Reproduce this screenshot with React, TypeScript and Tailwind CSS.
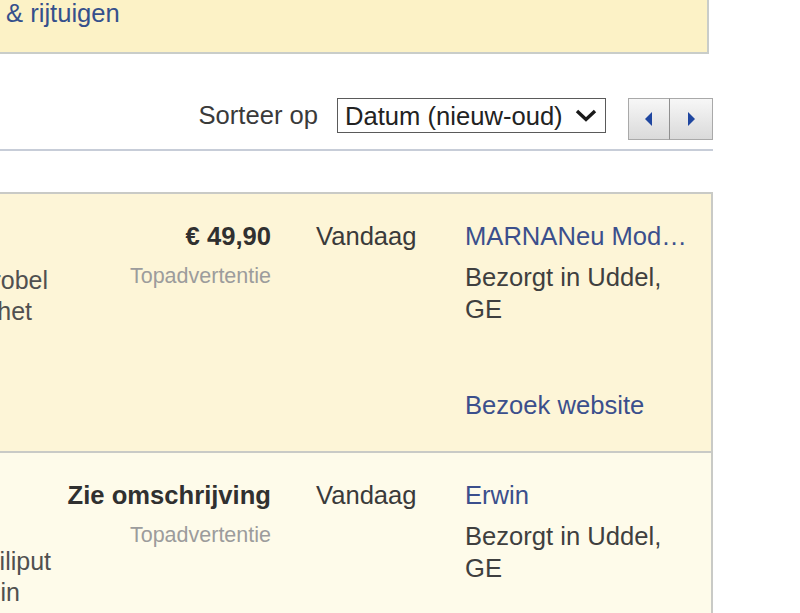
import React from "react";

function Row({
  bg,
  descPt,
  lines,
  price,
  seller,
  showWebsite,
}: {
  bg: string;
  descPt: string;
  lines: { text: string; pr: string }[];
  price: string;
  seller: string;
  showWebsite?: boolean;
}) {
  return (
    <div className={`flex border-t-2 border-r-2 border-[#c9cac6] ${bg}`}>
      <div className={`-ml-[300px] w-[356px] shrink-0 text-[25px] leading-[31px] text-[#505050] ${descPt}`}>
        {lines.map((l, i) => (
          <div key={i} className={`whitespace-nowrap text-right ${l.pr}`}>
            {l.text}
          </div>
        ))}
      </div>
      <div className="w-[215px] shrink-0 pt-[26px] text-right">
        <div className="text-[25.6px] leading-[32px] text-[#303030] font-bold whitespace-nowrap">{price}</div>
        <div className="mt-[12px] text-[21.5px] leading-[24px] text-[#9c9c9c]">Topadvertentie</div>
      </div>
      <div className="ml-[45px] w-[149px] shrink-0 pt-[26px] text-[25.6px] leading-[32px] text-[#3a3a3a]">
        Vandaag
      </div>
      <div className="w-[222px] shrink-0 pt-[26px] pb-[30px] text-[25.6px] leading-[32px]">
        <div className="truncate text-[#3b4f8c]">{seller}</div>
        <div className="mt-[9px] text-[#3f3f3f]">Bezorgt in Uddel, GE</div>
        {showWebsite ? (
          <div className="mt-[64px] text-[#3b4f8c]">Bezoek website</div>
        ) : (
          <div className="h-[96px]" />
        )}
      </div>
    </div>
  );
}

export default function App() {
  return (
    <div className="w-[800px] h-[613px] overflow-hidden bg-white font-['Liberation_Sans',Arial,sans-serif]">
      <div className="w-[713px]">
        <div className="-mt-[19px] mr-[4px] bg-[#fcf2c6] border-r-2 border-b-2 border-[#c9cdc9] pt-4 pb-[23px] pl-[6px] text-[25.6px] leading-[32px] text-[#35508c]">
          &amp; rijtuigen
        </div>

        <div className="flex items-start justify-end pt-[44px] pb-[9px] border-b-2 border-[#c7cdd8]">
          <div className="text-[25.6px] leading-[35px] text-[#3a3a3a] whitespace-nowrap">Sorteer op</div>
          <div className="ml-[19px] w-[269px] h-[35px] border border-[#5a5a5a] bg-white flex items-center justify-between pl-[7px] pr-[8px]">
            <span className="text-[25.6px] leading-[32px] text-[#222] whitespace-nowrap">Datum (nieuw-oud)</span>
            <svg width="22" height="13" viewBox="0 0 22 13">
              <polyline points="2,2 11,10.5 20,2" fill="none" stroke="#1a1a1a" strokeWidth="3.4" />
            </svg>
          </div>
          <div className="ml-[22px] flex h-[42px]">
            <div className="w-[42px] h-[42px] border border-[#a9a9a9] border-r-[#8f8f8f] bg-gradient-to-b from-[#f7f7f7] to-[#dadada] flex items-center justify-center">
              <svg width="8" height="14" viewBox="0 0 8 14">
                <polygon points="7,0 7,14 0,7" fill="#1f46a0" />
              </svg>
            </div>
            <div className="w-[43px] h-[42px] border border-l-0 border-[#a9a9a9] bg-gradient-to-b from-[#f7f7f7] to-[#dadada] flex items-center justify-center">
              <svg width="8" height="14" viewBox="0 0 8 14">
                <polygon points="1,0 1,14 8,7" fill="#1f46a0" />
              </svg>
            </div>
          </div>
        </div>

        <div className="mt-[41px]">
          <Row
            bg="bg-[#fdf5d7]"
            descPt="pt-[71px]"
            lines={[
              { text: "en garderobel", pr: "pr-[8px]" },
              { text: "ideaal voor het", pr: "pr-[24px]" },
            ]}
            price="€ 49,90"
            seller="MARNANeu Modelbouw"
            showWebsite
          />
          <Row
            bg="bg-[#fefbea]"
            descPt="pt-[93px]"
            lines={[
              { text: "serie Liliput", pr: "pr-[5px]" },
              { text: "geleverd in", pr: "pr-[36px]" },
            ]}
            price="Zie omschrijving"
            seller="Erwin"
          />
        </div>
      </div>
    </div>
  );
}
